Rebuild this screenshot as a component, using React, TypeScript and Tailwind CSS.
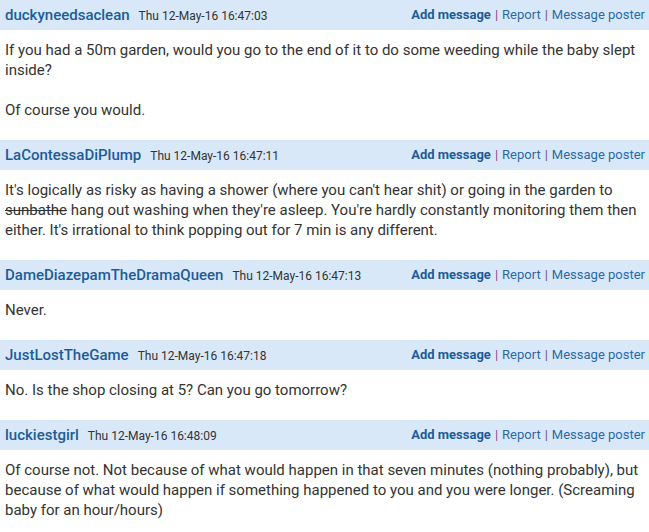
import React from 'react';

interface Post {
  name: string;
  date: string;
  body: React.ReactNode;
}

const posts: Post[] = [
  {
    name: 'duckyneedsaclean',
    date: 'Thu 12-May-16 16:47:03',
    body: (
      <>
        <p>If you had a 50m garden, would you go to the end of it to do some weeding while the baby slept inside?</p>
        <p className="mt-5">Of course you would.</p>
      </>
    ),
  },
  {
    name: 'LaContessaDiPlump',
    date: 'Thu 12-May-16 16:47:11',
    body: (
      <p>
        It's logically as risky as having a shower (where you can't hear shit) or going in the garden to{' '}
        <s>sunbathe</s> hang out washing when they're asleep. You're hardly constantly monitoring them then
        either. It's irrational to think popping out for 7 min is any different.
      </p>
    ),
  },
  {
    name: 'DameDiazepamTheDramaQueen',
    date: 'Thu 12-May-16 16:47:13',
    body: <p>Never.</p>,
  },
  {
    name: 'JustLostTheGame',
    date: 'Thu 12-May-16 16:47:18',
    body: <p>No. Is the shop closing at 5? Can you go tomorrow?</p>,
  },
  {
    name: 'luckiestgirl',
    date: 'Thu 12-May-16 16:48:09',
    body: (
      <p>
        Of course not. Not because of what would happen in that seven minutes (nothing probably), but
        because of what would happen if something happened to you and you were longer. (Screaming
        baby for an hour/hours)
      </p>
    ),
  },
];

function PostHeader({ name, date }: { name: string; date: string }) {
  return (
    <div className="flex h-[30px] items-center justify-between bg-[#d9e8f8] pl-[5px] pr-[4px]">
      <div className="flex items-baseline">
        <span className="text-[15px] font-medium text-[#1d5c99]">{name}</span>
        <span className="ml-[9px] text-[12px] text-[#333333]">{date}</span>
      </div>
      <div className="text-[13px] text-[#2a6aa8]">
        <span className="font-bold text-[#1d5c99]">Add message</span>
        <span className="mx-[4px] text-[#7a4f80]">|</span>
        <span>Report</span>
        <span className="mx-[4px] text-[#7a4f80]">|</span>
        <span>Message poster</span>
      </div>
    </div>
  );
}

export default function App() {
  return (
    <div className="min-h-screen w-[649px] overflow-hidden bg-white font-['Roboto',sans-serif]">
      {posts.map((post) => (
        <div key={post.name}>
          <PostHeader name={post.name} date={post.date} />
          <div className="pl-[5px] pr-[8px] pt-[10px] pb-[20px] text-[15px] leading-[20px] text-[#333333]">
            {post.body}
          </div>
        </div>
      ))}
    </div>
  );
}
